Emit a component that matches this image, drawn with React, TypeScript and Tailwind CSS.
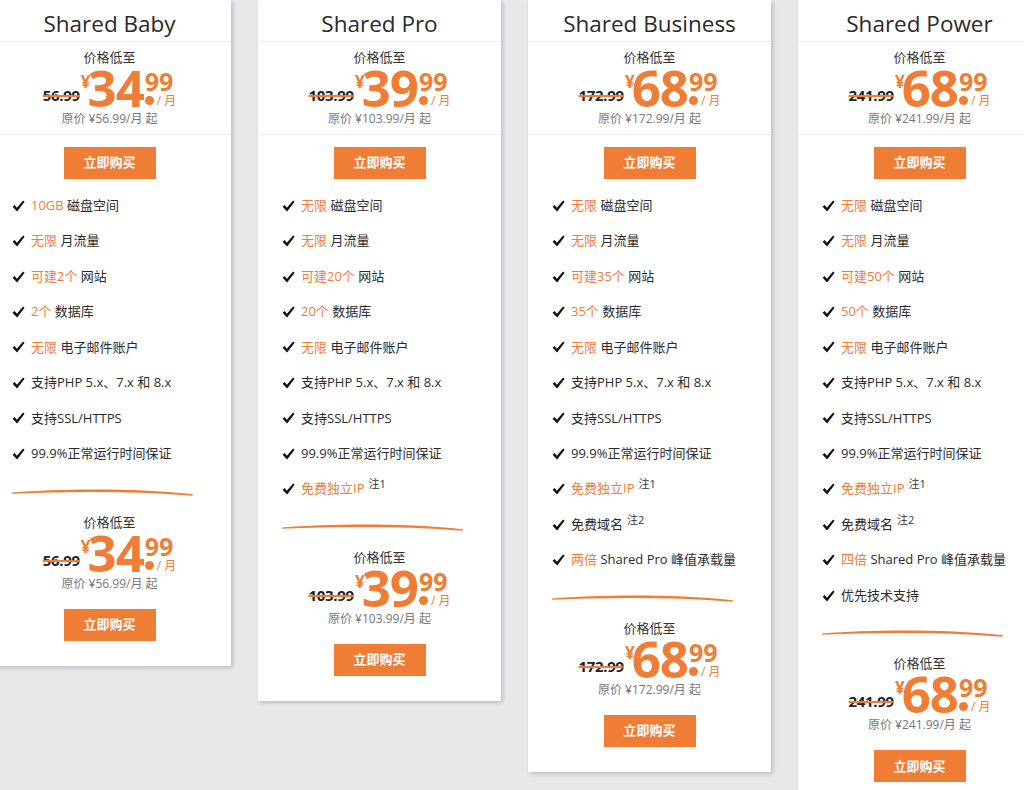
import React from "react";

type Seg = { t: string; o?: boolean; sup?: string };
type Plan = { name: string; orig: string; int: string; feats: Seg[][] };

const O = (t: string): Seg => ({ t, o: true });
const N = (t: string): Seg => ({ t });

const common = [
  [N("支持PHP 5.x、7.x 和 8.x")],
  [N("支持SSL/HTTPS")],
  [N("99.9%正常运行时间保证")],
];

const plans: Plan[] = [
  {
    name: "Shared Baby",
    orig: "56.99",
    int: "34",
    feats: [
      [O("10GB"), N(" 磁盘空间")],
      [O("无限"), N(" 月流量")],
      [O("可建2个"), N(" 网站")],
      [O("2个"), N(" 数据库")],
      [O("无限"), N(" 电子邮件账户")],
      ...common,
    ],
  },
  {
    name: "Shared Pro",
    orig: "103.99",
    int: "39",
    feats: [
      [O("无限"), N(" 磁盘空间")],
      [O("无限"), N(" 月流量")],
      [O("可建20个"), N(" 网站")],
      [O("20个"), N(" 数据库")],
      [O("无限"), N(" 电子邮件账户")],
      ...common,
      [{ t: "免费独立IP", o: true, sup: "注1" }],
    ],
  },
  {
    name: "Shared Business",
    orig: "172.99",
    int: "68",
    feats: [
      [O("无限"), N(" 磁盘空间")],
      [O("无限"), N(" 月流量")],
      [O("可建35个"), N(" 网站")],
      [O("35个"), N(" 数据库")],
      [O("无限"), N(" 电子邮件账户")],
      ...common,
      [{ t: "免费独立IP", o: true, sup: "注1" }],
      [{ t: "免费域名", sup: "注2" }],
      [O("两倍"), N(" Shared Pro 峰值承载量")],
    ],
  },
  {
    name: "Shared Power",
    orig: "241.99",
    int: "68",
    feats: [
      [O("无限"), N(" 磁盘空间")],
      [O("无限"), N(" 月流量")],
      [O("可建50个"), N(" 网站")],
      [O("50个"), N(" 数据库")],
      [O("无限"), N(" 电子邮件账户")],
      ...common,
      [{ t: "免费独立IP", o: true, sup: "注1" }],
      [{ t: "免费域名", sup: "注2" }],
      [O("四倍"), N(" Shared Pro 峰值承载量")],
      [N("优先技术支持")],
    ],
  },
];

function Price({ orig, int }: { orig: string; int: string }) {
  return (
    <div className="flex flex-col items-center">
      <div className="h-[20px] leading-[20px] text-[13px] text-[#333]">价格低至</div>
      <div className="flex justify-center items-end h-[41px]">
        <span className="text-[15px] font-bold leading-none text-[#222] line-through decoration-[#ef7d36] decoration-2 mb-[5px] tracking-[-0.3px]">
          {orig}
        </span>
        <span className="self-start text-[17px] font-bold leading-none text-[#ef7d36] mt-[6px] ml-[1px] mr-[-3px]">¥</span>
        <span className="text-[51px] font-bold leading-[41px] text-[#ef7d36] tracking-[-1px]">{int}</span>
        <div className="flex flex-col h-[41px] justify-between ml-[1px]">
          <span className="text-[25px] font-bold leading-[24px] text-[#ef7d36] mt-[2px]">99</span>
          <div className="flex items-end">
            <span className="w-[9px] h-[9px] rounded-full bg-[#ef7d36] mb-[3px]"></span>
            <span className="text-[12px] text-[#ef7d36] ml-[3px] leading-[14px]">/ 月</span>
          </div>
        </div>
      </div>
      <div className="h-[18px] leading-[18px] text-[12px] text-[#777] mt-[2px]">原价 ¥{orig}/月 起</div>
    </div>
  );
}

function BuyButton() {
  return (
    <div className="flex justify-center">
      <div className="w-[92px] h-[32px] bg-[#ef7d36] text-white text-[13px] font-bold flex items-center justify-center">
        立即购买
      </div>
    </div>
  );
}

function Check() {
  return (
    <svg width="13" height="12" viewBox="0 0 13 12" className="shrink-0">
      <path d="M0.6 6.8 L2.6 5.1 L4.9 7.7 L11.1 0.5 L12.6 1.8 L5.1 11.4 Z" fill="#111" />
    </svg>
  );
}

function Swoosh() {
  return (
    <svg width="182" height="10" viewBox="0 0 182 10">
      <path d="M0 5.4 C 50 1.6, 120 0.8, 181 7.2 L 180.4 8.8 C 120 3.8, 55 4.4, 0 6.8 Z" fill="#ef7d36" />
    </svg>
  );
}

function Card({ plan }: { plan: Plan }) {
  return (
    <div className="w-[243px] shrink-0 bg-white shadow-[2px_2px_4px_rgba(0,0,0,0.18)] pb-[25px]">
      <div className="h-[42px] border-b border-[#ececec] text-center text-[22.5px] leading-[32px] pt-[8px] text-[#2a2a2a]">
        {plan.name}
      </div>
      <div className="border-b border-[#ececec] pt-[5px] pb-[6px]">
        <Price orig={plan.orig} int={plan.int} />
      </div>
      <div className="pt-[12px]">
        <BuyButton />
      </div>
      <div className="mt-[9px] pl-[24px]">
        {plan.feats.map((f, i) => (
          <div key={i} className="h-[35.45px] flex items-center text-[13px] text-[#2b2b2b]">
            <Check />
            <span className="ml-[6px] whitespace-nowrap">
              {f.map((s, j) => (
                <React.Fragment key={j}>
                  <span className={s.o ? "text-[#ef7d36]" : ""}>{s.t}</span>
                  {s.sup && (
                    <span className="text-[11px] ml-[4px] text-[#333] relative top-[-5px]">{s.sup}</span>
                  )}
                </React.Fragment>
              ))}
            </span>
          </div>
        ))}
      </div>
      <div className="pl-[24px] mt-[15px] h-[10px]">
        <Swoosh />
      </div>
      <div className="mt-[15px]">
        <Price orig={plan.orig} int={plan.int} />
      </div>
      <div className="mt-[16px]">
        <BuyButton />
      </div>
    </div>
  );
}

export default function App() {
  return (
    <div
      className="w-[1024px] h-[790px] overflow-hidden bg-[#e8e8ea]"
      style={{ fontFamily: '"Open Sans", "Noto Sans CJK SC", sans-serif' }}
    >
      <div className="flex items-start gap-[27px] ml-[-12px]">
        {plans.map((p) => (
          <Card key={p.name} plan={p} />
        ))}
      </div>
    </div>
  );
}
